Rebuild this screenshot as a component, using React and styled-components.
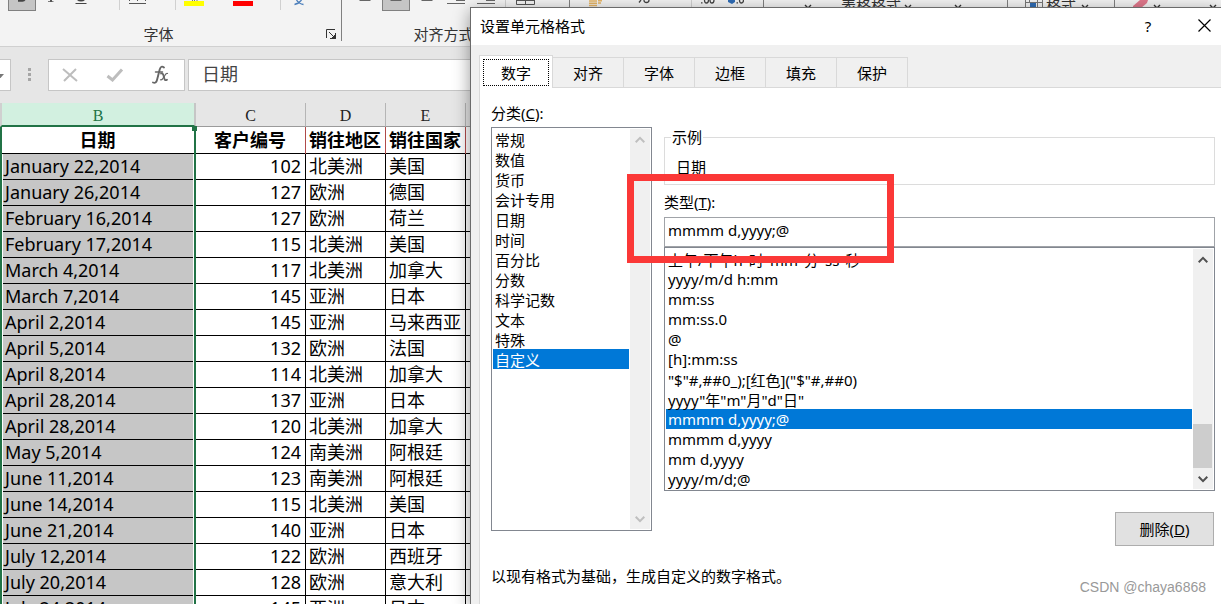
import { useState } from 'react'
import styled, { createGlobalStyle, css } from 'styled-components'

const GlobalStyle = createGlobalStyle`
  * {
    box-sizing: border-box;
  }

  body {
    margin: 0;
    font-family: 'Noto Sans', 'Noto Sans CJK SC', sans-serif;
    font-size: 15px;
    line-height: 20px;
    color: #000;
  }

  button, input, select {
    font: inherit;
    color: inherit;
  }
`

const Page = styled.div`
  position: relative;
  height: 100vh;
  overflow: hidden;
  background: #fff;
`

/* ---------- ribbon ---------- */

const Ribbon = styled.header`
  display: flex;
  height: 47px;
  background: #f3f3f3;
  border-bottom: 1px solid #d0d0d0;
`

const Group = styled.section`
  display: flex;
  flex-direction: column;
  flex: none;
  width: ${(props) => props.$width};
  height: 41px;
  border-right: 1px solid #808080;
`

const Tools = styled.div`
  display: flex;
  height: 11px;
  padding-left: ${(props) => props.$pad || '0px'};
`

const Tool = styled.button`
  flex: none;
  width: ${(props) => props.$width || '28px'};
  height: 11px;
  padding: 0;
  overflow: hidden;
  border: 1px solid transparent;
  border-top: 0;
  background: transparent;
  text-align: left;

  svg {
    display: block;
    margin: 0 auto;
  }

  ${(props) =>
    props.$pressed &&
    css`
      background: #c5c5c5;
      border-color: #808080;
    `}
`

const TextTool = styled(Tool)`
  color: #333;
  line-height: 4px;
  white-space: nowrap;
  overflow: visible;
`

const Split = styled.span`
  flex: none;
  width: 1px;
  height: 10px;
  background: #d0d0d0;
`

const GroupFooter = styled.div`
  display: flex;
  align-items: center;
  height: 30px;
  padding: 16px 4px 0 0;
`

const GroupName = styled.span`
  flex: 1;
  padding-right: 8px;
  text-align: center;
  color: #333;
`

const Launcher = styled.button`
  width: 12px;
  height: 12px;
  padding: 0;
  border: 0;
  background: transparent;

  svg {
    display: block;
  }
`

/* ---------- formula bar ---------- */

const FormulaBar = styled.div`
  display: flex;
  height: 56px;
  padding-top: 12px;
  background: #e6e6e6;
`

const NameBox = styled.div`
  width: 11px;
  height: 32px;
  padding-top: 14px;
  background: #fff;
  border: 1px solid #c6c6c6;
  border-left: 0;

  svg {
    display: block;
  }
`

const Grip = styled.div`
  width: 37px;
  height: 32px;
  padding: 9px 0 0 17px;

  svg {
    display: block;
  }
`

const FormulaButtons = styled.div`
  display: flex;
  align-items: center;
  width: 137px;
  height: 32px;
  background: #fff;
  border: 1px solid #c6c6c6;
`

const FormulaButton = styled.button`
  display: flex;
  align-items: center;
  justify-content: center;
  width: 45px;
  height: 30px;
  padding: 0 3px 0 0;
  border: 0;
  background: transparent;
`

const FormulaInput = styled.input`
  flex: 1;
  height: 32px;
  margin-left: 3px;
  padding: 0 0 4px 13px;
  background: #fff;
  border: 1px solid #c6c6c6;
  border-right: 0;
  border-radius: 0;
  outline: 0;
  font-size: 18px;
  color: #444;
`

/* ---------- sheet ---------- */

const Sheet = styled.table`
  width: 100%;
  table-layout: fixed;
  border-collapse: separate;
  border-spacing: 0;
  font-size: 18px;

  td, th {
    padding: 0;
  }
`

const Letter = styled.th`
  height: 24px;
  background: #e6e6e6;
  border-right: 1px solid #b5b5b5;
  border-bottom: 1px solid #9b9b9b;
  font: 400 16px/20px 'Liberation Serif', serif;
  color: #222;
  vertical-align: bottom;

  ${(props) =>
    props.$active &&
    css`
      background: #d2f0e0;
      border-left: 2px solid #d0d0d0;
      border-right: 2px solid #c6c6c6;
      border-bottom: 2px solid #217346;
      line-height: 18px;
      color: #217346;
    `}
`

const Cell = styled.td`
  border-right: 1px solid ${(props) => (props.$head ? '#b04a4a' : '#000')};

  ${(props) =>
    props.$active &&
    css`
      border-left: 2px solid #217346;
      border-right: 2px solid #217346;
    `}
`

const Value = styled.div`
  height: ${(props) => (props.$head ? '27px' : '26px')};
  padding: 0 4px 0 3px;
  overflow: hidden;
  white-space: nowrap;
  line-height: ${(props) => (props.$head ? '27px' : '25px')};
  border-bottom: 1px solid #000;
  text-align: ${(props) => props.$align || 'left'};
  font-weight: ${(props) => (props.$head ? 700 : 400)};

  ${(props) =>
    props.$filled &&
    css`
      margin: 0 1px;
      padding: 0 2px;
      background: #c6c6c6;
    `}
`

const FillHandle = styled.span`
  position: absolute;
  left: 192px;
  top: 126px;
  width: 5px;
  height: 5px;
  background: #217346;
`

/* ---------- dialog ---------- */

const Dialog = styled.section`
  position: absolute;
  top: 7px;
  left: 470px;
  right: 0;
  bottom: 0;
  display: flex;
  flex-direction: column;
  background: #f0f0f0;
  border: 1px solid #6b6b6b;
  border-right: 0;
  border-bottom: 0;
  box-shadow: 0 4px 16px rgba(0, 0, 0, 0.4);
`

const TitleBar = styled.header`
  display: flex;
  align-items: center;
  height: 37px;
  padding: 0 9px 2px;
  background: #fff;
`

const Title = styled.h1`
  flex: 1;
  margin: 0;
  font-size: 15px;
  line-height: 20px;
  font-weight: 400;
`

const TitleButton = styled.button`
  display: flex;
  align-items: center;
  justify-content: center;
  width: 16px;
  height: 20px;
  margin-left: 40px;
  padding: 0;
  border: 0;
  background: transparent;
`

const Tabs = styled.nav`
  display: flex;
  align-items: flex-end;
  height: 42px;
  padding-left: 8px;
`

const Tab = styled.button`
  width: 71px;
  height: 30px;
  padding: 0;
  background: #f0f0f0;
  border: 1px solid #d9d9d9;
  border-left: 0;
  border-bottom: 0;

  ${(props) =>
    props.$active &&
    css`
      width: 74px;
      height: 33px;
      margin-bottom: -1px;
      padding: 3px;
      background: #fff;
      border-left: 1px solid #d9d9d9;
      z-index: 1;
    `}
`

const TabFocus = styled.span`
  display: block;
  height: 27px;
  line-height: 26px;
  border: 1px dotted #000;
`

const Panel = styled.div`
  flex: 1;
  margin-left: 8px;
  padding: 15px 6px 0 11px;
  background: #fff;
  border: 1px solid #d9d9d9;
  border-right: 0;
  border-bottom: 0;
`

const Columns = styled.div`
  display: grid;
  grid-template-columns: 161px minmax(0, 1fr);
  column-gap: 12px;
`

const FieldLabel = styled.label`
  display: block;
  height: 24px;
`

const ListFrame = styled.div`
  display: flex;
  height: ${(props) => props.$height};
  padding: 1px;
  background: #fff;
  border: 1px solid #828790;
`

const List = styled.select`
  flex: 1;
  min-width: 0;
  height: 100%;
  padding: 0;
  border: 0;
  border-radius: 0;
  outline: 0;
  background: #fff;
  overflow-y: auto;
  scrollbar-width: none;

  option {
    height: 20px;
    min-height: 20px;
    padding: 0 2px;
    line-height: 20px;
    color: #000;
  }

  option:checked {
    background-image: linear-gradient(#0078d7, #0078d7);
    -webkit-text-fill-color: #fff;
  }
`

const Scroller = styled.div`
  display: flex;
  flex-direction: column;
  width: 20px;
  margin-left: 1px;
  background: #f0f0f0;
`

const ScrollButton = styled.button`
  display: flex;
  align-items: center;
  justify-content: center;
  height: 21px;
  padding: 0;
  border: 0;
  background: transparent;
`

const ScrollTrack = styled.div`
  display: flex;
  flex: 1;
  flex-direction: column;
  justify-content: flex-end;
`

const ScrollThumb = styled.div`
  height: 44px;
  margin-right: 1px;
  background: #cdcdcd;
`

const Sample = styled.fieldset`
  height: 58px;
  margin: 24px 0 0;
  padding: 10px 11px 0;
  border: 1px solid #dcdcdc;
  min-width: 0;

  legend {
    margin-left: -5px;
    padding: 0 1px;
  }
`

const TypeLabel = styled(FieldLabel)`
  height: 25px;
  margin-top: 7px;
`

const TypeInput = styled.input`
  display: block;
  width: 100%;
  height: 30px;
  padding: 0 3px 5px;
  border: 1px solid #a0a3a8;
  border-radius: 0;
  outline: 0;
`

const Actions = styled.div`
  display: flex;
  justify-content: flex-end;
  margin-top: 21px;
  padding-right: 1px;
`

const DeleteButton = styled.button`
  width: 99px;
  height: 34px;
  padding: 0;
  background: #e1e1e1;
  border: 1px solid #adadad;
`

const Hint = styled.p`
  margin: 20px 0 0;
`

/* ---------- annotations ---------- */

const Marker = styled.div`
  position: absolute;
  top: 174px;
  left: 627px;
  width: 267px;
  height: 89px;
  border: 7px solid #fb3837;
  pointer-events: none;
`

const Watermark = styled.span`
  position: absolute;
  right: 15px;
  bottom: 7px;
  font-family: 'Liberation Sans', sans-serif;
  font-size: 14px;
  color: #999;
`

const rows = [
  ['January 22,2014', 102, '北美洲', '美国'],
  ['January 26,2014', 127, '欧洲', '德国'],
  ['February 16,2014', 127, '欧洲', '荷兰'],
  ['February 17,2014', 115, '北美洲', '美国'],
  ['March 4,2014', 117, '北美洲', '加拿大'],
  ['March 7,2014', 145, '亚洲', '日本'],
  ['April 2,2014', 145, '亚洲', '马来西亚'],
  ['April 5,2014', 132, '欧洲', '法国'],
  ['April 8,2014', 114, '北美洲', '加拿大'],
  ['April 28,2014', 137, '亚洲', '日本'],
  ['April 28,2014', 120, '北美洲', '加拿大'],
  ['May 5,2014', 124, '南美洲', '阿根廷'],
  ['June 11,2014', 123, '南美洲', '阿根廷'],
  ['June 14,2014', 115, '北美洲', '美国'],
  ['June 21,2014', 140, '亚洲', '日本'],
  ['July 12,2014', 122, '欧洲', '西班牙'],
  ['July 20,2014', 128, '欧洲', '意大利'],
  ['July 24,2014', 145, '亚洲', '日本'],
]

const tabs = ['数字', '对齐', '字体', '边框', '填充', '保护']

const categories = [
  '常规', '数值', '货币', '会计专用', '日期', '时间',
  '百分比', '分数', '科学记数', '文本', '特殊', '自定义',
]

const formats = [
  '上午/下午h"时"mm"分"ss"秒"',
  'yyyy/m/d h:mm',
  'mm:ss',
  'mm:ss.0',
  '@',
  '[h]:mm:ss',
  '"$"#,##0_);[红色]("$"#,##0)',
  'yyyy"年"m"月"d"日"',
  'mmmm d,yyyy;@',
  'mmmm d,yyyy',
  'mm d,yyyy',
  'yyyy/m/d;@',
]

function Chevron({ up, color = '#505050' }) {
  return (
    <svg width="10" height="8" viewBox="0 0 10 8" fill="none" stroke={color} strokeWidth="2">
      <path d={up ? 'M0.7 6.2 5 1.9l4.3 4.3' : 'M0.7 1.8 5 6.1l4.3-4.3'} />
    </svg>
  )
}

function MenuArrow() {
  return (
    <svg width="8" height="9" viewBox="0 0 8 9" fill="none" stroke="#333" strokeWidth="1.4">
      <path d="M1 4l3 3 3-3" />
    </svg>
  )
}

function LinesIcon({ long }) {
  return (
    <svg width="18" height="11" viewBox="0 0 18 11" stroke="#666">
      {long ? <path d="M9 0.5h9M0 3.5h18" /> : <path d="M3.5 0.5h11" />}
    </svg>
  )
}

function LauncherButton({ label }) {
  return (
    <Launcher aria-label={label}>
      <svg width="12" height="12" viewBox="0 0 12 12" fill="none" stroke="#333">
        <path d="M1.5 10V1.5H10M4 4l5.5 5.5M10.5 5v5.5H5" />
        <path d="M10.5 6.5v4h-4z" fill="#333" />
      </svg>
    </Launcher>
  )
}

function RibbonBar() {
  return (
    <Ribbon>
      <Group $width="342px">
        <Tools $pad="8px">
          <Tool $pressed aria-label="加粗">
            <svg width="12" height="10" viewBox="0 0 12 10">
              <path d="M2 0h7.5q-0.8 1.8-3 1.8H2z" fill="#444" />
            </svg>
          </Tool>
          <Tool $width="30px" aria-label="倾斜">
            <svg width="10" height="10" viewBox="0 0 10 10">
              <path d="M4 0h2v1.200h1.5v.8H2v-.8h2z" fill="#555" />
            </svg>
          </Tool>
          <Tool $width="30px" aria-label="下划线">
            <svg width="12" height="10" viewBox="0 0 12 10">
              <path d="M2 0h8q-1.5 1.6-4 1.6T2 0z" fill="#444" />
              <path d="M0.5 3.5h11" stroke="#444" />
            </svg>
          </Tool>
          <Tool $width="23px" aria-label="更多下划线" />
          <Split />
          <Tool $width="36px" aria-label="边框">
            <svg width="18" height="10" viewBox="0 0 18 10" stroke="#555">
              <path d="M0 3.5h17" />
              <path d="M0.5 0v2M8.5 0v2M16.5 0v2" strokeDasharray="1 1" />
            </svg>
          </Tool>
          <Tool $width="19px" aria-label="边框选项" />
          <Split />
          <Tool $width="36px" aria-label="填充颜色">
            <svg width="20" height="10" viewBox="0 0 20 10">
              <path d="M8 0l1.5 1.5L11 0M13 0v1" fill="none" stroke="#777" />
              <path d="M0 1h20v5H0z" fill="#ff0" />
            </svg>
          </Tool>
          <Tool $width="12px" aria-label="填充选项" />
          <Tool $width="38px" aria-label="字体颜色">
            <svg width="20" height="10" viewBox="0 0 20 10">
              <path d="M0 1h20v5H0z" fill="red" />
            </svg>
          </Tool>
          <Tool $width="18px" aria-label="颜色选项" />
          <Split />
          <Tool $width="36px" aria-label="拼音">
            <svg width="12" height="10" viewBox="0 0 12 10" fill="none" stroke="#4a7ebb" strokeWidth="1.3">
              <path d="M3.5 0Q6 4 10.5 4.5M8.500 0Q6 3.5 1.5 4.5" />
            </svg>
          </Tool>
        </Tools>
        <GroupFooter>
          <GroupName>字体</GroupName>
          <LauncherButton label="字体设置" />
        </GroupFooter>
      </Group>

      <Group $width="228px">
        <Tools $pad="9px">
          <Tool aria-label="左对齐"><LinesIcon /></Tool>
          <Tool aria-hidden $width="3px" />
          <Tool $pressed aria-label="居中"><LinesIcon /></Tool>
          <Tool aria-hidden $width="3px" />
          <Tool aria-label="右对齐"><LinesIcon /></Tool>
          <Tool $width="30px" aria-label="减少缩进"><LinesIcon long /></Tool>
          <Tool $width="30px" aria-label="增加缩进"><LinesIcon long /></Tool>
          <Tool aria-hidden $width="4px" />
          <Split />
          <Tool $width="38px" aria-label="合并后居中">
            <svg width="19" height="10" viewBox="0 0 19 10" fill="none" stroke="#555">
              <path d="M0.5 0v4.5h18V0M0 0.5h19M9.5 0v4" />
            </svg>
          </Tool>
        </Tools>
        <GroupFooter>
          <GroupName>对齐方式</GroupName>
          <LauncherButton label="对齐设置" />
        </GroupFooter>
      </Group>

      <Group $width="194px">
        <Tools $pad="12px">
          <Tool aria-label="会计数字格式">
            <svg width="14" height="10" viewBox="0 0 14 10" stroke="#e6b566" strokeWidth="1.5">
              <path d="M0 1h8M0 3.2h8M0 5.4h8M9 0.7h4M9 2.9h3" />
            </svg>
          </Tool>
          <Tool $width="68px" aria-label="百分比">
            <svg width="14" height="10" viewBox="0 0 14 10" fill="none" stroke="#444" strokeWidth="1.3">
              <path d="M2 2.5L4 0M7 0q0 2.5 2.5 2.5T12 0" />
            </svg>
          </Tool>
          <Tool $width="13px" aria-hidden />
          <Split />
          <Tool $width="32px" aria-label="增加小数位数">
            <svg width="14" height="10" viewBox="0 0 14 10" fill="none" stroke="#444" strokeWidth="1.3">
              <path d="M0 2.8h1.5M3.5 0q0 3 2 3t2-3M9 0q0 3 2 3t2-3" />
            </svg>
          </Tool>
          <Tool $width="24px" aria-label="减少小数位数">
            <svg width="16" height="10" viewBox="0 0 16 10" fill="none">
              <path d="M0 0h7v2L4 4 0 2z" fill="#2f6cb5" />
              <path d="M8.5 2.8H10M11.5 0q0 3 2 3t2-3" stroke="#444" strokeWidth="1.3" />
            </svg>
          </Tool>
        </Tools>
      </Group>

      <Group $width="244px">
        <Tools $pad="30px">
          <Tool aria-label="条件格式"><MenuArrow /></Tool>
          <Tool $width="18px" aria-hidden />
          <TextTool $width="62px">表格格式</TextTool>
          <Tool $width="12px" aria-label="表格格式选项"><MenuArrow /></Tool>
          <Tool $width="38px" aria-hidden />
          <Tool $width="12px" aria-label="单元格样式"><MenuArrow /></Tool>
        </Tools>
      </Group>

      <Group $width="107px">
        <Tools $pad="15px">
          <Tool $width="22px" aria-label="格式">
            <svg width="18" height="10" viewBox="0 0 18 10" fill="none">
              <path d="M0.5 0v8M17.5 0v8M0 2.5h18M12.5 0v8M4.5 0v3" stroke="#777" />
              <path d="M5 3h6v4H5z" fill="#2f6cb5" />
            </svg>
          </Tool>
          <TextTool $width="34px">格式</TextTool>
          <Tool $width="12px" aria-label="格式选项"><MenuArrow /></Tool>
        </Tools>
      </Group>

      <Tools $pad="15px">
        <Tool $width="20px" aria-label="清除">
          <svg width="18" height="10" viewBox="0 0 18 10">
            <path d="M9 0h8l-1 3-6 5H2V6z" fill="#e0788c" />
          </svg>
        </Tool>
        <Tool $width="14px" aria-label="清除选项"><MenuArrow /></Tool>
        <Tool $width="42px" aria-hidden />
        <Tool $width="14px" aria-label="查找"><MenuArrow /></Tool>
      </Tools>
    </Ribbon>
  )
}

function FormulaRow() {
  return (
    <FormulaBar>
      <NameBox>
        <svg width="4" height="4" viewBox="0 0 4 4">
          <path d="M0 0h4L0.5 4H0z" fill="#777" />
        </svg>
      </NameBox>
      <Grip>
        <svg width="3" height="14" viewBox="0 0 3 14" fill="#a6a6a6">
          <path d="M0 0h3v3H0zM0 5h3v3H0zM0 10h3v3H0z" />
        </svg>
      </Grip>
      <FormulaButtons>
        <FormulaButton aria-label="取消">
          <svg width="16" height="14" viewBox="0 0 16 14" fill="none" stroke="#bdbdbd" strokeWidth="2">
            <path d="M1 1l14 12M14 1L2 13" />
          </svg>
        </FormulaButton>
        <FormulaButton aria-label="输入">
          <svg width="18" height="14" viewBox="0 0 18 14" fill="none" stroke="#bdbdbd" strokeWidth="3">
            <path d="M1.5 8l5 4L16 1.5" />
          </svg>
        </FormulaButton>
        <FormulaButton aria-label="插入函数">
          <svg width="18" height="20" viewBox="0 0 18 20" fill="none" stroke="#666" strokeLinecap="round">
            <path d="M13 2.5Q10 0 8.7 4.5L6 15q-1 3.8-4 2.5" strokeWidth="1.9" />
            <path d="M4.5 7h7" strokeWidth="1.5" />
            <path d="M10 8.5q2-0.5 2.5 2l1 3.5q0.5 2 2.5 0.7" strokeWidth="1.8" />
            <path d="M16.5 8.5q-1.5-0.5-3 2.5l-1 1.5q-1.5 3-3 2.3" strokeWidth="1.2" />
          </svg>
        </FormulaButton>
      </FormulaButtons>
      <FormulaInput aria-label="编辑栏" defaultValue="日期" />
    </FormulaBar>
  )
}

function SheetTable() {
  return (
    <Sheet>
      <colgroup>
        <col width="196" />
        <col width="110" />
        <col width="80" />
        <col width="80" />
        <col />
      </colgroup>
      <thead>
        <tr>
          <Letter $active>B</Letter>
          <Letter>C</Letter>
          <Letter>D</Letter>
          <Letter>E</Letter>
          <Letter />
        </tr>
      </thead>
      <tbody>
        <tr>
          <Cell $active><Value $head $align="center">日期</Value></Cell>
          <Cell $head><Value $head $align="center">客户编号</Value></Cell>
          <Cell $head><Value $head $align="center">销往地区</Value></Cell>
          <Cell $head><Value $head $align="center">销往国家</Value></Cell>
          <Cell $head><Value $head /></Cell>
        </tr>
        {rows.map(([date, id, region, country], i) => (
          <tr key={i}>
            <Cell $active><Value $filled>{date}</Value></Cell>
            <Cell><Value $align="right">{id}</Value></Cell>
            <Cell><Value>{region}</Value></Cell>
            <Cell><Value>{country}</Value></Cell>
            <Cell><Value /></Cell>
          </tr>
        ))}
      </tbody>
    </Sheet>
  )
}

function Scrollbar({ disabled }) {
  const color = disabled ? '#bfbfbf' : '#505050'
  return (
    <Scroller>
      <ScrollButton aria-label="向上滚动" disabled={disabled}><Chevron up color={color} /></ScrollButton>
      <ScrollTrack>{!disabled && <ScrollThumb />}</ScrollTrack>
      <ScrollButton aria-label="向下滚动" disabled={disabled}><Chevron color={color} /></ScrollButton>
    </Scroller>
  )
}

function FormatDialog() {
  const [tab, setTab] = useState('数字')
  const [category, setCategory] = useState('自定义')
  const [format, setFormat] = useState('mmmm d,yyyy;@')

  return (
    <Dialog role="dialog" aria-labelledby="dialog-title">
      <TitleBar>
        <Title id="dialog-title">设置单元格格式</Title>
        <TitleButton>?</TitleButton>
        <TitleButton aria-label="关闭">
          <svg width="13" height="13" viewBox="0 0 13 13" stroke="#000" strokeWidth="1.2">
            <path d="M0.5 0.5l12 12M12.5 0.5l-12 12" />
          </svg>
        </TitleButton>
      </TitleBar>
      <Tabs>
        {tabs.map((name) => (
          <Tab key={name} $active={name === tab} onClick={() => setTab(name)}>
            {name === tab ? <TabFocus>{name}</TabFocus> : name}
          </Tab>
        ))}
      </Tabs>
      <Panel>
        <Columns>
          <div>
            <FieldLabel htmlFor="category">分类(<u>C</u>):</FieldLabel>
            <ListFrame $height="404px">
              <List id="category" size={12} value={category} onChange={(e) => setCategory(e.target.value)}>
                {categories.map((name) => <option key={name}>{name}</option>)}
              </List>
              <Scrollbar disabled />
            </ListFrame>
          </div>
          <div>
            <Sample>
              <legend>示例</legend>
              日期
            </Sample>
            <TypeLabel htmlFor="type">类型(<u>T</u>):</TypeLabel>
            <TypeInput id="type" value={format} onChange={(e) => setFormat(e.target.value)} />
            <ListFrame $height="244px">
              <List aria-label="类型列表" size={12} value={format} onChange={(e) => setFormat(e.target.value)}>
                {formats.map((name) => <option key={name}>{name}</option>)}
              </List>
              <Scrollbar />
            </ListFrame>
            <Actions>
              <DeleteButton>删除(<u>D</u>)</DeleteButton>
            </Actions>
          </div>
        </Columns>
        <Hint>以现有格式为基础，生成自定义的数字格式。</Hint>
      </Panel>
    </Dialog>
  )
}

export default function App() {
  return (
    <Page>
      <GlobalStyle />
      <RibbonBar />
      <FormulaRow />
      <SheetTable />
      <FillHandle />
      <FormatDialog />
      <Marker />
      <Watermark>CSDN @chaya6868</Watermark>
    </Page>
  )
}
